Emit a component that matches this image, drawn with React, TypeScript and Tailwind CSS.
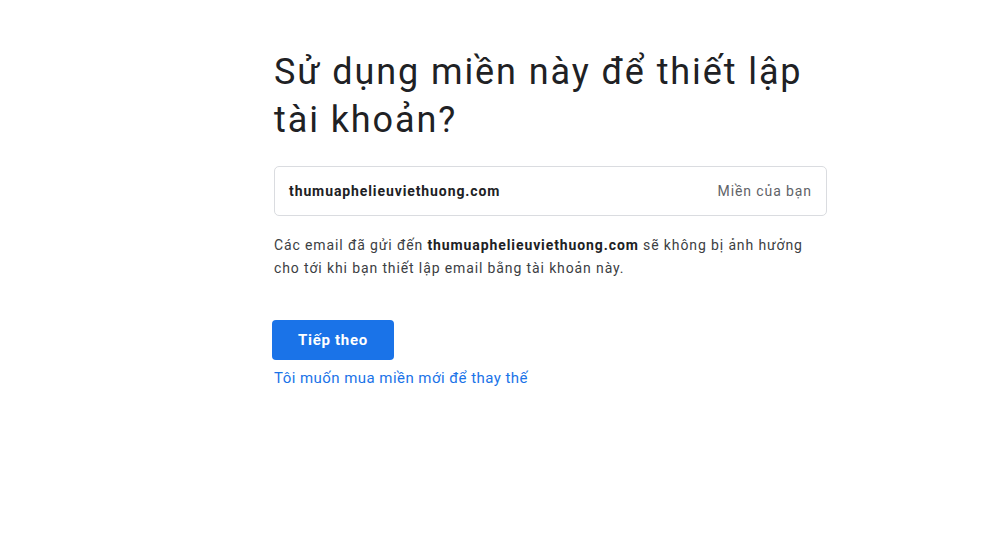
export default function App() {
  const domain = "thumuaphelieuviethuong.com";

  return (
    <div className="min-h-screen bg-white font-['Roboto',sans-serif] text-[#202124]">
      <div className="ml-[274px] w-[553px] pt-[48px]">
        <h1 className="text-[36px] leading-[48px] font-normal tracking-[1.9px] text-[#202124]">
          Sử dụng miền này để thiết lập tài khoản?
        </h1>

        <div className="mt-[22px] flex h-[50px] items-center justify-between rounded-[5px] border border-[#dadce0] px-[14px]">
          <span className="text-[14px] font-bold tracking-[0.9px] text-[#202124]">{domain}</span>
          <span className="text-[14px] tracking-[0.9px] text-[#5f6368]">Miền của bạn</span>
        </div>

        <p className="mt-[18px] text-[14px] leading-[23px] tracking-[0.88px] text-[#3c4043]">
          Các email đã gửi đến{" "}
          <span className="font-bold tracking-[0.9px] text-[#202124]">{domain}</span> sẽ
          không bị ảnh hưởng cho tới khi bạn thiết lập email bằng tài khoản này.
        </p>

        <button className="-ml-[2px] mt-[40px] h-[40px] w-[122px] rounded-[4px] bg-[#1a73e8] text-[15px] font-bold tracking-[0.7px] text-white">
          Tiếp theo
        </button>

        <div className="mt-[6px]">
          <a className="text-[15px] tracking-[0.45px] text-[#1a73e8]" href="#">
            Tôi muốn mua miền mới để thay thế
          </a>
        </div>
      </div>
    </div>
  );
}
